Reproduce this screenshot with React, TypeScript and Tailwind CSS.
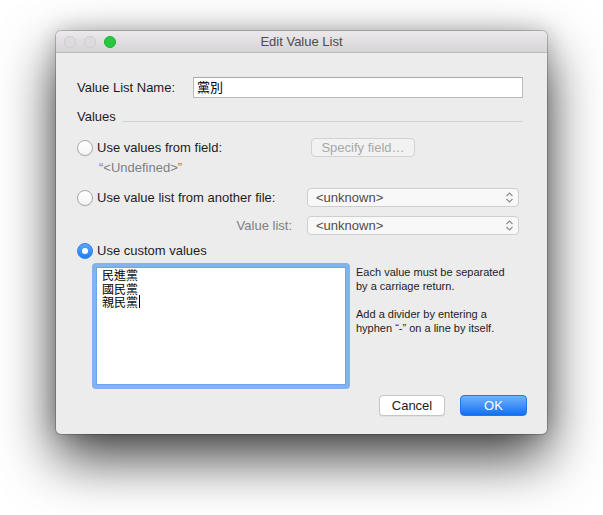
import React from 'react';

function Radio({ checked = false }: { checked?: boolean }) {
  if (checked) {
    return (
      <span className="flex h-[16px] w-[16px] shrink-0 items-center justify-center rounded-full border border-[#2f7fe6] bg-gradient-to-b from-[#5aa7fa] to-[#1a7ff5]">
        <span className="h-[6px] w-[6px] rounded-full bg-white" />
      </span>
    );
  }
  return (
    <span className="h-[16px] w-[16px] shrink-0 rounded-full border border-[#a9a9a9] bg-gradient-to-b from-white to-[#f4f4f4] shadow-[0_0.5px_0.5px_rgba(0,0,0,0.08)]" />
  );
}

function Popup({ label }: { label: string }) {
  return (
    <div className="flex h-[19px] w-[212px] items-center justify-between rounded-[4px] border border-[#cfcfcf] bg-[#f8f8f8] pl-[8px] pr-[4px] text-[13px] text-[#4c4c4c]">
      <span className="leading-none">{label}</span>
      <svg width="9" height="13" viewBox="0 0 9 13" fill="none" stroke="#8a8a8a" strokeWidth="1.1">
        <path d="M1.5 5 L4.5 2 L7.5 5" />
        <path d="M1.5 8 L4.5 11 L7.5 8" />
      </svg>
    </div>
  );
}

export default function App() {
  return (
    <div
      className="min-h-[515px] w-[603px] bg-white pl-[56px] pt-[31px]"
      style={{ fontFamily: '"Liberation Sans", Arial, sans-serif' }}
    >
      <div className="flex h-[403px] w-[491px] flex-col rounded-[5px] bg-[#ececec] shadow-[0_24px_55px_rgba(0,0,0,0.75),0_0_22px_rgba(0,0,0,0.2),0_0_0_1px_rgba(0,0,0,0.2)]">
        {/* title bar */}
        <div className="grid h-[22px] shrink-0 grid-cols-[1fr_auto_1fr] items-center rounded-t-[5px] border-b border-[#b9b9b9] bg-gradient-to-b from-[#ebe9eb] to-[#d6d4d6]">
          <div className="flex items-center gap-[8px] pl-[8px]">
            <span className="h-[12px] w-[12px] rounded-full border border-[#cfcdcf] bg-[#dddbdd]" />
            <span className="h-[12px] w-[12px] rounded-full border border-[#cfcdcf] bg-[#dddbdd]" />
            <span className="h-[12px] w-[12px] rounded-full border border-[#16b52c] bg-[#27c83f]" />
          </div>
          <div className="text-[13px] text-[#4d4d4d]">Edit Value List</div>
          <div />
        </div>

        <div className="flex flex-1 flex-col pl-[21px] pr-[20px] text-[13px] text-[#1c1c1c]">
          {/* name row */}
          <div className="mt-[24px] flex h-[21px] items-center">
            <span className="w-[116px]">Value List Name:</span>
            <div
              className="flex h-[21px] w-[330px] items-center border border-[#bababa] border-t-[#a9a9a9] bg-white pl-[3px] text-[13px] text-black"
              style={{ fontFamily: '"Liberation Sans", "Noto Sans CJK TC", sans-serif' }}
            >
              黨別
            </div>
          </div>

          {/* Values heading */}
          <div className="mt-[10px] flex h-[18px] items-center">
            <span>Values</span>
            <span className="mr-[4px] ml-[6px] mt-[9px] h-px flex-1 bg-[#d4d4d4]" />
          </div>

          {/* from field */}
          <div className="mt-[12px] grid h-[19px] grid-cols-[230px_212px] items-center">
            <div className="flex items-center gap-[4px]">
              <Radio />
              <span>Use values from field:</span>
            </div>
            <div className="pl-[4px]">
              <div className="flex h-[19px] w-[104px] items-center justify-center rounded-[4px] border border-[#d2d2d2] bg-[#f2f2f2] text-[13px] text-[#a8a8a8]">
                Specify field…
              </div>
            </div>
          </div>

          <div className="mt-[3px] flex h-[16px] items-center pl-[22px] text-[#7f7f7f]">“&lt;Undefined&gt;”</div>

          {/* from another file */}
          <div className="mt-[12px] grid h-[19px] grid-cols-[230px_212px] items-center">
            <div className="flex items-center gap-[4px]">
              <Radio />
              <span>Use value list from another file:</span>
            </div>
            <Popup label="<unknown>" />
          </div>

          <div className="mt-[9px] grid h-[19px] grid-cols-[230px_212px] items-center">
            <div className="pr-[15px] text-right text-[#7f7f7f]">Value list:</div>
            <Popup label="<unknown>" />
          </div>

          {/* custom values */}
          <div className="mt-[7px] flex h-[18px] items-center gap-[4px]">
            <Radio checked />
            <span>Use custom values</span>
          </div>

          <div className="mt-[3px] flex h-[126px]">
            <div className="ml-[15px] h-[126px] w-[258px] rounded-[4px] border-[4px] border-[#82b3ee] bg-white">
              <div
                className="h-full border border-[#6fa5e8] px-[5px] text-[12px] leading-[13.5px] text-black"
                style={{ fontFamily: '"Noto Sans CJK TC", sans-serif' }}
              >
                <div>民進黨</div>
                <div>國民黨</div>
                <div className="flex items-center">
                  親民黨<span className="ml-[1px] inline-block h-[13px] w-px bg-black" />
                </div>
              </div>
            </div>
            <div className="ml-[6px] w-[160px] pt-[2px] text-[11px] leading-[14px] text-[#1c1c1c]">
              <p>Each value must be separated by a carriage return.</p>
              <p className="mt-[14px]">Add a divider by entering a hyphen “-” on a line by itself.</p>
            </div>
          </div>

          {/* buttons */}
          <div className="mt-[6px] flex h-[21px] justify-end gap-[15px]">
            <div className="flex h-[21px] w-[66px] items-center justify-center rounded-[4px] border border-[#c6c6c6] bg-white text-[13px] text-[#1c1c1c] shadow-[0_0.5px_0.5px_rgba(0,0,0,0.1)]">
              Cancel
            </div>
            <div className="flex h-[21px] w-[67px] items-center justify-center rounded-[4px] border border-[#1f78ee] bg-gradient-to-b from-[#6cb3fa] to-[#0b6ff2] text-[13px] text-white">
              OK
            </div>
          </div>
        </div>
      </div>
    </div>
  );
}
